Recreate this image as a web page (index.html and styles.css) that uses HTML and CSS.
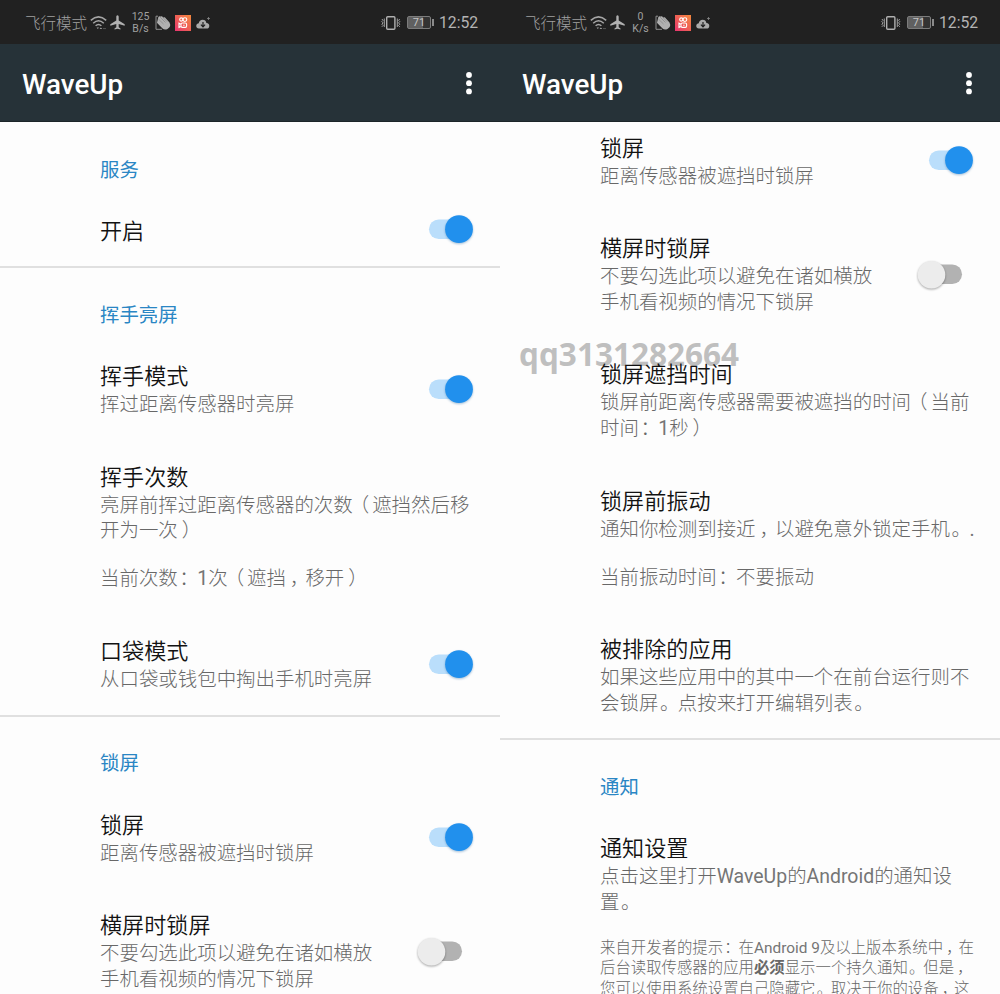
FILE: index.html
```html
<!DOCTYPE html>
<html lang="zh-CN">
<head>
<meta charset="utf-8">
<title>WaveUp</title>
<link rel="stylesheet" href="styles.css">
</head>
<body>
<svg class="defs" width="0" height="0">
  <defs>
    <linearGradient id="warm" x1="0" y1="1" x2="1" y2="0">
      <stop offset="0" stop-color="#e8356f"/><stop offset="1" stop-color="#f58a3c"/>
    </linearGradient>
    <symbol id="wifi" viewBox="0 0 17 16">
      <g fill="none" stroke="#a6a6a6" stroke-width="1.5">
        <path d="M.8 5.4Q8.5-1.6 16.2 5.4M3.2 8.2Q8.5 3.4 13.8 8.2M5.6 10.8Q8.5 8.2 11.4 10.8"/>
      </g>
      <path d="M6.6 12.6h2.4L7.8 14zM9.6 14l1.3-1.6 1.3 1.6z" fill="#a6a6a6"/>
      <path d="M13 13.6h3" stroke="#555" stroke-width="1"/>
    </symbol>
    <symbol id="plane" viewBox="0 0 15 15">
      <path d="M7.5.2c.8 0 1.2.8 1.2 1.6v3.8l6 3.6v1.5l-6-1.8v3.3l1.8 1.3v1.1l-3-.8-3 .8v-1.1l1.8-1.3V8.9l-6 1.8V9.2l6-3.6V1.8C6.3 1 6.7.2 7.5.2z" fill="#b0b0b0"/>
    </symbol>
    <symbol id="hand" viewBox="0 0 16 16">
      <path d="M3 1.200H1V14.300H7" fill="none" stroke="#909090" stroke-width="1"/>
      <path d="M2.3 6.5 3.3 2.200Q4 .8 5.300 1.500L7 1.200 8.200 2.500 9.800 2.300 14.500 7.400Q15.800 9.500 14.700 12L12.500 13.900Q9.500 15.300 7.300 13.200L2.400 8.200Q1.600 7.300 2.300 6.500z" fill="#b0b0b0"/>
      <path d="M5 2 10.500 7.500M8 2.500 12 6.600M3.400 4 8.500 9" stroke="#777" stroke-width=".5"/>
    </symbol>
    <symbol id="kuai" viewBox="0 0 16 16">
      <rect width="16" height="16" fill="url(#warm)"/>
      <g fill="none" stroke="#fff" stroke-width="1.1">
        <circle cx="6.300" cy="4.500" r="1.600"/><circle cx="9.900" cy="4.600" r="1.900"/>
        <rect x="6" y="8" width="5.600" height="4.400" rx="1.300"/>
        <path d="M6 9.200 4 8.200V12.400L6 11.400M8.200 10.200h1.400"/>
      </g>
    </symbol>
    <symbol id="cloud" viewBox="0 0 14 14">
      <path d="M3 12.500Q.2 12.300.2 9.800.3 7.700 2.700 7.300 3.400 3.700 6.700 3.700 9.700 3.700 10.400 6.900 13.400 7.300 13.300 9.900 13.200 12.400 10.500 12.500z" fill="#aaa"/>
      <path d="M7 6v4M4.900 8.600 7 10.800 9.100 8.600" fill="none" stroke="#222" stroke-width="1.200"/>
      <path d="M12.500 1v3M11 2.500h3" stroke="#888" stroke-width=".8"/>
    </symbol>
    <symbol id="vibrate" viewBox="0 0 20 16">
      <rect x="5.700" y="1.700" width="8.200" height="12.600" rx="1" fill="none" stroke="#b0b0b0" stroke-width="1.400"/>
      <path d="M.8 4l1.300 1.300-1.300 1.300 1.300 1.300-1.300 1.300 1.300 1.300-1.300 1.300M3.300 3.500v8.500M16.300 3.500v8.500M18.800 4l-1.300 1.300 1.300 1.300-1.300 1.300 1.300 1.300-1.300 1.300 1.300 1.300" fill="none" stroke="#a0a0a0" stroke-width="1"/>
    </symbol>
    <symbol id="dots" viewBox="0 0 8 24">
      <g fill="#fff"><circle cx="4" cy="4" r="2.900"/><circle cx="4" cy="12.200" r="2.900"/><circle cx="4" cy="20.400" r="2.900"/></g>
    </symbol>
    <symbol id="on" viewBox="0 0 60 34">
      <rect x="13" y="6.500" width="40" height="19.500" rx="9.700" fill="#badefb"/>
      <circle class="shade-blue" cx="43" cy="16.200" r="13.900" fill="#2190ed"/>
    </symbol>
    <symbol id="off" viewBox="0 0 60 34">
      <rect x="8" y="6.500" width="38" height="19.500" rx="9.700" fill="#b2b2b2"/>
      <circle class="shade-gray" cx="15.500" cy="16.700" r="13.800" fill="#ececec"/>
    </symbol>
  </defs>
</svg>

<main class="screens">
  <section class="phone">
    <div class="status">
      <span class="carrier">飞行模式</span>
      <svg class="wifi"><use href="#wifi"/></svg>
      <svg class="plane"><use href="#plane"/></svg>
      <span class="speed">125<br>B/s</span>
      <svg class="hand"><use href="#hand"/></svg>
      <svg class="kuai"><use href="#kuai"/></svg>
      <svg class="cloud"><use href="#cloud"/></svg>
      <svg class="vibrate"><use href="#vibrate"/></svg>
      <span class="battery">71</span>
      <span class="clock">12:52</span>
    </div>
    <header class="appbar"><h1>WaveUp</h1><svg class="dots"><use href="#dots"/></svg></header>
    <div class="prefs">
      <h2 class="category first">服务</h2>
      <div class="item single"><div class="text"><h3>开启</h3></div><svg class="switch"><use href="#on"/></svg></div>
      <hr>
      <h2 class="category">挥手亮屏</h2>
      <div class="item"><div class="text"><h3>挥手模式</h3><p>挥过距离传感器时亮屏</p></div><svg class="switch"><use href="#on"/></svg></div>
      <div class="item"><div class="text"><h3>挥手次数</h3><p>亮屏前挥过距离传感器的次数<i class="open">（</i>遮挡然后移<br>开为一次<i>）</i></p><p class="gap">当前次数<i class="near">：</i><span>1</span>次<i class="open">（</i>遮挡<i>，</i>移开<i>）</i></p></div></div>
      <div class="item"><div class="text"><h3>口袋模式</h3><p>从口袋或钱包中掏出手机时亮屏</p></div><svg class="switch"><use href="#on"/></svg></div>
      <hr>
      <h2 class="category">锁屏</h2>
      <div class="item"><div class="text"><h3>锁屏</h3><p>距离传感器被遮挡时锁屏</p></div><svg class="switch"><use href="#on"/></svg></div>
      <div class="item"><div class="text"><h3>横屏时锁屏</h3><p>不要勾选此项以避免在诸如横放<br>手机看视频的情况下锁屏</p></div><svg class="switch"><use href="#off"/></svg></div>
    </div>
  </section>

  <section class="phone">
    <div class="status">
      <span class="carrier">飞行模式</span>
      <svg class="wifi"><use href="#wifi"/></svg>
      <svg class="plane"><use href="#plane"/></svg>
      <span class="speed">0<br>K/s</span>
      <svg class="hand"><use href="#hand"/></svg>
      <svg class="kuai"><use href="#kuai"/></svg>
      <svg class="cloud"><use href="#cloud"/></svg>
      <svg class="vibrate"><use href="#vibrate"/></svg>
      <span class="battery">71</span>
      <span class="clock">12:52</span>
    </div>
    <header class="appbar"><h1>WaveUp</h1><svg class="dots"><use href="#dots"/></svg></header>
    <div class="prefs scrolled">
      <div class="item"><div class="text"><h3>锁屏</h3><p>距离传感器被遮挡时锁屏</p></div><svg class="switch"><use href="#on"/></svg></div>
      <div class="item"><div class="text"><h3>横屏时锁屏</h3><p>不要勾选此项以避免在诸如横放<br>手机看视频的情况下锁屏</p></div><svg class="switch"><use href="#off"/></svg></div>
      <div class="item"><div class="text"><h3>锁屏遮挡时间</h3><p>锁屏前距离传感器需要被遮挡的时间<i class="open">（</i>当前<br>时间<i class="near">：</i><span>1</span>秒<i>）</i></p></div></div>
      <div class="item"><div class="text"><h3>锁屏前振动</h3><p>通知你检测到接近<i>，</i>以避免意外锁定手机<i class="near">。</i><span>.</span></p><p class="gap">当前振动时间<i class="near">：</i>不要振动</p></div></div>
      <div class="item"><div class="text"><h3>被排除的应用</h3><p>如果这些应用中的其中一个在前台运行则不<br>会锁屏<i class="near">。</i>点按来打开编辑列表<i class="near">。</i></p></div></div>
      <hr>
      <h2 class="category">通知</h2>
      <div class="item"><div class="text"><h3>通知设置</h3><p>点击这里打开<span>WaveUp</span>的<span>Android</span>的通知设<br>置<i class="near">。</i></p><p class="gap small">来自开发者的提示<i class="near">：</i>在<span>Android 9</span>及以上版本系统中<i>，</i>在<br>后台读取传感器的应用<b>必须</b>显示一个持久通知<i class="near">。</i>但是<i>，</i><br>您可以使用系统设置自己隐藏它<i class="near">。</i>取决于你的设备<i>，</i>这</p></div></div>
      <span class="watermark">qq3131282664</span>
    </div>
  </section>
</main>
</body>
</html>
```
FILE: styles.css
```css
* { box-sizing: border-box; }
body {
  margin: 0;
  background: #fdfdfd;
  font-family: Roboto, "Noto Sans CJK SC", sans-serif;
}
.defs { display: block; height: 0; }
h1, h2, h3, p { margin: 0; font-weight: 400; }
.screens { display: grid; grid-template-columns: 500px 500px; height: 994px; overflow: hidden; }
.phone { display: flex; flex-direction: column; height: 994px; overflow: hidden; }

/* system status bar */
.status {
  display: flex;
  align-items: center;
  flex: none;
  height: 44px;
  padding: 1px 22px 0 25px;
  background: #212121;
  color: #a0a0a0;
}
.status svg { flex: none; }
.carrier { width: 65px; padding-bottom: 2px; font-size: 15.5px; font-weight: 300; white-space: nowrap; }
.wifi { width: 17px; height: 16px; }
.plane { width: 15px; height: 15px; margin-left: 3px; }
.speed { width: 29px; margin-left: 1px; font-size: 10.5px; line-height: 12px; text-align: center; }
.hand { width: 16px; height: 16px; }
.kuai { width: 16px; height: 16px; margin-left: 4px; }
.cloud { width: 14px; height: 14px; margin-left: 5px; }
.vibrate { width: 20px; height: 16px; margin-left: auto; }
.battery {
  position: relative;
  width: 24px;
  height: 13px;
  margin: 0 8px 0 6px;
  border: 1px solid #7c7c7c;
  border-radius: 2px;
  background: linear-gradient(90deg, #606060 68%, #333 68%);
  color: #c4c4c4;
  font-size: 11px;
  line-height: 11px;
  text-align: center;
}
.battery::after {
  content: "";
  position: absolute;
  top: 2px;
  right: -4px;
  width: 2px;
  height: 7px;
  background: #8a8a8a;
}
.clock { width: 39px; font-size: 15.7px; color: #b4b4b4; }

.appbar {
  display: flex;
  flex: none;
  align-items: center;
  justify-content: space-between;
  height: 78px;
  padding: 4px 27px 0 22px;
  background: #263238;
  border-bottom: 1px solid #1c2529;
  color: #fff;
}
.appbar h1 { font-size: 27.8px; font-weight: 500; line-height: 36px; }
.dots { width: 8px; height: 24px; margin-bottom: 4px; }

/* preference list */
.prefs { position: relative; z-index: 0; flex: 1; min-height: 0; overflow: hidden; white-space: nowrap; }
.scrolled { display: flex; flex-direction: column; }
.scrolled > * { flex: none; }
.scrolled .item:first-child { padding-top: 11.5px; }
.category {
  padding: 35.3px 0 11.4px 100px;
  font-size: 19.4px;
  line-height: 24px;
  color: #2a86c4;
}
.category.first { padding-top: 37px; }
.item { display: flex; align-items: center; padding: 23.2px 24px 22px 100px; }
.text { flex: 1; min-width: 0; }
.item h3 { padding-bottom: 2px; font-size: 22.1px; font-weight: 350; line-height: 28px; color: #121212; }
.item p { font-size: 19.44px; font-weight: 300; line-height: 25.5px; color: #686868; }
.item p span { font-weight: 400; color: #757575; }
.item .gap { margin-top: 22.5px; }
.item .small { font-size: 15.4px; line-height: 20.5px; }
.small b { font-weight: 700; }
/* nudge full-width punctuation inside its cell */
.item i { font-style: normal; padding-left: .2em; margin-right: -.2em; }
.item i.near { padding-left: .08em; margin-right: -.08em; }
.item i.open { padding: 0 .15em 0 0; margin: 0 0 0 -.15em; }
.switch { flex: none; width: 60px; height: 34px; margin-left: -60px; }
.single { padding-top: 22px; padding-bottom: 19px; }
.single .switch { margin-top: -3px; }
hr { height: 2px; margin: 0; border: 0; background: #e0e0e0; }
.shade-blue { filter: drop-shadow(0 1.5px 1px rgba(33, 100, 160, .4)); }
.shade-gray { filter: drop-shadow(0 1px 1px rgba(0, 0, 0, .35)); }

.watermark {
  position: absolute;
  z-index: -1;
  left: 19px;
  top: 212px;
  font: 700 31.5px/40px "Open Sans", sans-serif;
  color: #bfbfbf;
}
```
